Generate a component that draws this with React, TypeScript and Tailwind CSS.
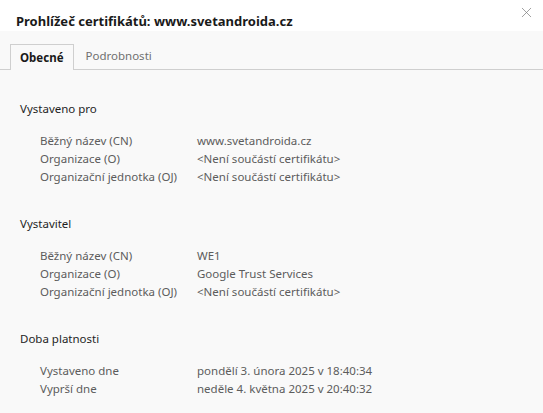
import { X } from "lucide-react";

type Row = { label: string; value: string };

const sections: { title: string; rows: Row[] }[] = [
  {
    title: "Vystaveno pro",
    rows: [
      { label: "Běžný název (CN)", value: "www.svetandroida.cz" },
      { label: "Organizace (O)", value: "<Není součástí certifikátu>" },
      { label: "Organizační jednotka (OJ)", value: "<Není součástí certifikátu>" },
    ],
  },
  {
    title: "Vystavitel",
    rows: [
      { label: "Běžný název (CN)", value: "WE1" },
      { label: "Organizace (O)", value: "Google Trust Services" },
      { label: "Organizační jednotka (OJ)", value: "<Není součástí certifikátu>" },
    ],
  },
  {
    title: "Doba platnosti",
    rows: [
      { label: "Vystaveno dne", value: "pondělí 3. února 2025 v 18:40:34" },
      { label: "Vyprší dne", value: "neděle 4. května 2025 v 20:40:32" },
    ],
  },
];

export default function App() {
  return (
    <div className="w-[543px] h-[413px] overflow-hidden bg-[#f9f9f9] font-['Noto_Sans',sans-serif]">
      {/* header */}
      <div className="h-[31px] bg-white flex items-end pl-4 relative">
        <h1 className="text-[13px] font-bold text-[#1a1a1a] leading-none pb-[3px]">
          Prohlížeč certifikátů: www.svetandroida.cz
        </h1>
        <button className="absolute right-[8px] top-[4px] text-[#7a7a7a]">
          <X size={17} strokeWidth={1} />
        </button>
      </div>

      {/* tabs */}
      <div className="pt-[13px] pl-[10px] flex items-end border-b border-[#cfcfcf] h-[39px]">
        <div className="h-[26px] -mb-px px-[9px] flex items-center border border-b-0 border-[#cfcfcf] bg-[#f9f9f9] text-[11.5px] font-bold text-[#1a1a1a]">
          Obecné
        </div>
        <div className="h-[26px] px-[12px] flex items-center text-[11.5px] text-[#707070]">
          Podrobnosti
        </div>
      </div>

      {/* content */}
      <div className="pl-5 pt-[30px]">
        {sections.map((s) => (
          <div key={s.title} className="mb-[29px]">
            <div className="text-[11.5px] leading-[18px] text-[#1f1f1f]">{s.title}</div>
            <div className="mt-[14px] pl-5">
              {s.rows.map((r) => (
                <div key={r.label} className="flex text-[11.5px] leading-[18px] text-[#5c5c5c]">
                  <div className="w-[157px] shrink-0">{r.label}</div>
                  <div>{r.value}</div>
                </div>
              ))}
            </div>
          </div>
        ))}
      </div>
    </div>
  );
}
